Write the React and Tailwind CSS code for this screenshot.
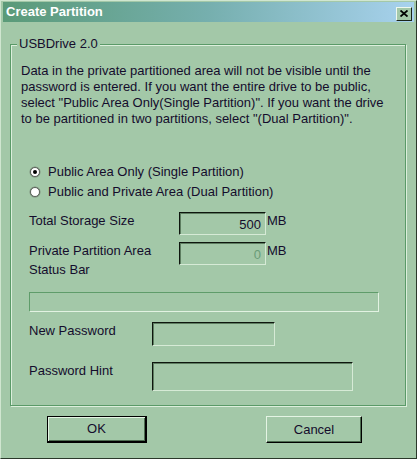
import React from "react";

const font = { fontFamily: '"Liberation Sans", Arial, sans-serif' };

function Radio({ checked }) {
    return (
        <svg width="12" height="12" viewBox="0 0 12 12" className="shrink-0">
            <circle cx="6" cy="6" r="5.5" fill="#7c8c7c" />
            <circle cx="6" cy="6" r="4.5" fill="#ffffff" stroke="#404a40" strokeWidth="0.8" />
            {checked && <circle cx="6" cy="6" r="2" fill="#000000" />}
        </svg>
    );
}

function Sunken({ className, children }) {
    return (
        <div className={"border-t border-l border-t-[#0e160e] border-l-[#0e160e] border-b border-r border-b-[#d6ead6] border-r-[#d6ead6] shadow-[inset_1px_1px_0_#5d7d60] bg-[#a3c8a8] " + className}>
            {children}
        </div>
    );
}

export default function App() {
    return (
        <div style={font} className="w-[417px] h-[459px] bg-[#a3c8a8] text-[#140c2c] text-[13px] leading-[16px] border border-t-[#d0e6d0] border-l-[#d0e6d0] border-r-[#2a382a] border-b-[#2a382a] pt-[1px] px-[2px] flex flex-col">
            {/* title bar */}
            <div className="h-[20px] shrink-0 flex items-center justify-between pl-[3px] pr-[2px] bg-gradient-to-r from-[#5a9a78] via-[#76afae] to-[#a8d2ee]">
                <span className="text-white font-bold text-[13px]">Create Partition</span>
                <div className="w-[16px] h-[14px] mt-[3px] bg-[#a3c8a8] border border-t-[#eef8ee] border-l-[#eef8ee] border-r-[#1a241a] border-b-[#1a241a] flex items-center justify-center">
                    <svg width="8" height="7" viewBox="0 0 8 7">
                        <path d="M0.5 0.5 L7.5 6.5 M7.5 0.5 L0.5 6.5" stroke="#000" strokeWidth="1.8" />
                    </svg>
                </div>
            </div>

            {/* group box */}
            <div className="relative mt-[22px] ml-[7px] mr-[8px] border border-[#5a9a68] shadow-[1px_1px_0_#dcefdc,inset_1px_1px_0_#dcefdc] flex flex-col pb-[14px]">
                <span className="absolute left-[6px] top-[-9px] px-[2px] bg-[#a3c8a8] leading-[16px]">USBDrive 2.0</span>

                <p className="pl-[10px] mt-[18px] whitespace-nowrap">
                    Data in the private partitioned area will not be visible until the<br />
                    password is entered. If you want the entire drive to be public,<br />
                    select "Public Area Only(Single Partition)". If you want the drive<br />
                    to be partitioned in two partitions, select "(Dual Partition)".
                </p>

                <div className="pl-[18px] mt-[37px] flex flex-col gap-[4px]">
                    <div className="flex items-center gap-[7px] h-[16px]">
                        <Radio checked />
                        <span>Public Area Only (Single Partition)</span>
                    </div>
                    <div className="flex items-center gap-[7px] h-[16px]">
                        <Radio />
                        <span>Public and Private Area (Dual Partition)</span>
                    </div>
                </div>

                <div className="pl-[18px] mt-[12px] flex items-start">
                    <span className="w-[150px] pt-[1px]">Total Storage Size</span>
                    <Sunken className="w-[87px] h-[23px] flex items-center justify-end pr-[4px] pt-[2px]">
                        <span>500</span>
                    </Sunken>
                    <span className="ml-[1px] pt-[1px]">MB</span>
                </div>

                <div className="pl-[18px] mt-[7px] flex items-start">
                    <div className="w-[150px] pt-[1px] flex flex-col">
                        <span>Private Partition Area</span>
                        <span className="mt-[3px]">Status Bar</span>
                    </div>
                    <Sunken className="w-[87px] h-[23px] flex items-center justify-end pr-[4px] pt-[2px]">
                        <span className="text-[#6a9c78]">0</span>
                    </Sunken>
                    <span className="ml-[1px] pt-[1px]">MB</span>
                </div>

                <div className="ml-[18px] mt-[14px] w-[350px] h-[20px] border border-t-[#5f9c6a] border-l-[#5f9c6a] border-b-[#e2f2e2] border-r-[#e2f2e2]" />

                <div className="pl-[18px] mt-[10px] flex items-start">
                    <span className="w-[123px] pt-[1px]">New Password</span>
                    <Sunken className="w-[123px] h-[24px]" />
                </div>

                <div className="pl-[18px] mt-[16px] flex items-start">
                    <span className="w-[123px] pt-[1px]">Password Hint</span>
                    <Sunken className="w-[201px] h-[29px]" />
                </div>
            </div>

            {/* buttons */}
            <div className="mt-[10px] flex items-start">
                <button className="ml-[44px] w-[100px] h-[27px] border border-black border-r-2 border-b-2 bg-[#a3c8a8] shadow-[inset_1px_1px_0_#e4f4e4,inset_-1px_-1px_0_#4d6d50] flex items-center justify-center text-[#140c2c]">
                    OK
                </button>
                <button className="ml-[119px] w-[96px] h-[27px] border border-t-[#e4f4e4] border-l-[#e4f4e4] border-r-black border-b-black bg-[#a3c8a8] shadow-[inset_-1px_-1px_0_#4d6d50] flex items-center justify-center text-[#140c2c]">
                    Cancel
                </button>
            </div>
        </div>
    );
}
